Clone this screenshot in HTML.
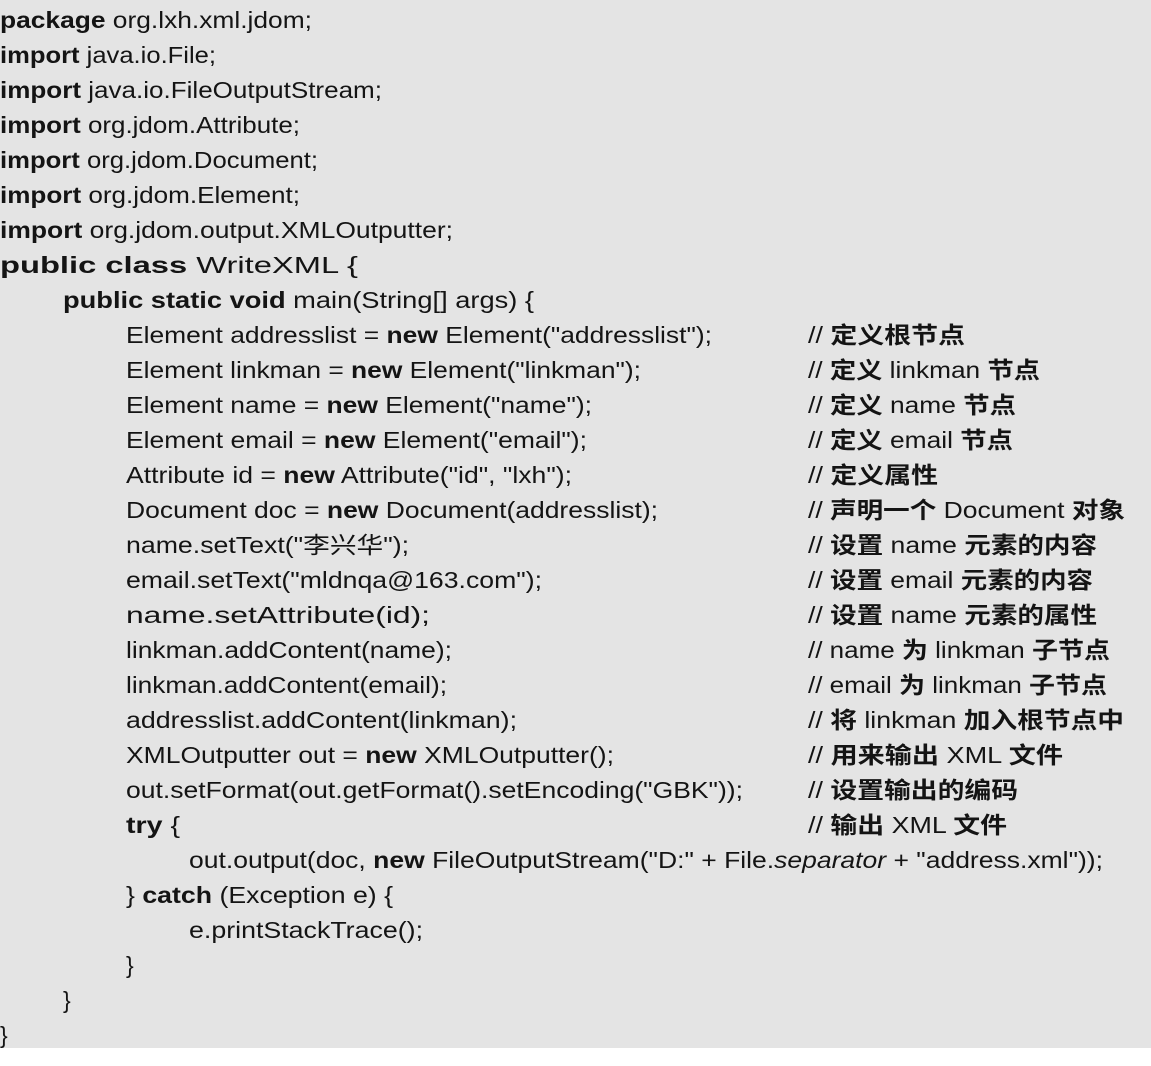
<!DOCTYPE html>
<html><head><meta charset="utf-8"><style>
html,body{margin:0;padding:0;background:#fff;}
svg{display:block}
text{font-family:"Liberation Sans","Noto Sans CJK SC",sans-serif;font-size:23px;fill:#141414;}
.b{font-weight:bold}
.c{font-weight:bold}
</style></head><body>
<svg width="1151" height="1066" xmlns="http://www.w3.org/2000/svg">
<rect x="0" y="0" width="1151" height="1048" fill="#e4e4e4"/>
<g>
<text x="0" y="28" textLength="312" lengthAdjust="spacingAndGlyphs"><tspan class="b">package</tspan> org.lxh.xml.jdom;</text>
<text x="0" y="63" textLength="216" lengthAdjust="spacingAndGlyphs"><tspan class="b">import</tspan> java.io.File;</text>
<text x="0" y="98" textLength="382" lengthAdjust="spacingAndGlyphs"><tspan class="b">import</tspan> java.io.FileOutputStream;</text>
<text x="0" y="133" textLength="300" lengthAdjust="spacingAndGlyphs"><tspan class="b">import</tspan> org.jdom.Attribute;</text>
<text x="0" y="168" textLength="318" lengthAdjust="spacingAndGlyphs"><tspan class="b">import</tspan> org.jdom.Document;</text>
<text x="0" y="203" textLength="300" lengthAdjust="spacingAndGlyphs"><tspan class="b">import</tspan> org.jdom.Element;</text>
<text x="0" y="238" textLength="453" lengthAdjust="spacingAndGlyphs"><tspan class="b">import</tspan> org.jdom.output.XMLOutputter;</text>
<text x="0" y="273" textLength="358" lengthAdjust="spacingAndGlyphs"><tspan class="b">public class</tspan> WriteXML {</text>
<text x="63" y="308" textLength="471" lengthAdjust="spacingAndGlyphs"><tspan class="b">public static void</tspan> main(String[] args) {</text>
<text x="126" y="343" textLength="586" lengthAdjust="spacingAndGlyphs">Element addresslist = <tspan class="b">new</tspan> Element("addresslist");</text>
<text x="126" y="378" textLength="515" lengthAdjust="spacingAndGlyphs">Element linkman = <tspan class="b">new</tspan> Element("linkman");</text>
<text x="126" y="413" textLength="466" lengthAdjust="spacingAndGlyphs">Element name = <tspan class="b">new</tspan> Element("name");</text>
<text x="126" y="448" textLength="461" lengthAdjust="spacingAndGlyphs">Element email = <tspan class="b">new</tspan> Element("email");</text>
<text x="126" y="483" textLength="446" lengthAdjust="spacingAndGlyphs">Attribute id = <tspan class="b">new</tspan> Attribute("id", "lxh");</text>
<text x="126" y="518" textLength="532" lengthAdjust="spacingAndGlyphs">Document doc = <tspan class="b">new</tspan> Document(addresslist);</text>
<text x="126" y="553" textLength="283" lengthAdjust="spacingAndGlyphs">name.setText("李兴华");</text>
<text x="126" y="588" textLength="416" lengthAdjust="spacingAndGlyphs">email.setText("mldnqa@163.com");</text>
<text x="126" y="623" textLength="304" lengthAdjust="spacingAndGlyphs">name.setAttribute(id);</text>
<text x="126" y="658" textLength="326" lengthAdjust="spacingAndGlyphs">linkman.addContent(name);</text>
<text x="126" y="693" textLength="321" lengthAdjust="spacingAndGlyphs">linkman.addContent(email);</text>
<text x="126" y="728" textLength="391" lengthAdjust="spacingAndGlyphs">addresslist.addContent(linkman);</text>
<text x="126" y="763" textLength="488" lengthAdjust="spacingAndGlyphs">XMLOutputter out = <tspan class="b">new</tspan> XMLOutputter();</text>
<text x="126" y="798" textLength="617" lengthAdjust="spacingAndGlyphs">out.setFormat(out.getFormat().setEncoding("GBK"));</text>
<text x="126" y="833" textLength="54" lengthAdjust="spacingAndGlyphs"><tspan class="b">try</tspan> {</text>
<text x="189" y="868" textLength="914" lengthAdjust="spacingAndGlyphs">out.output(doc, <tspan class="b">new</tspan> FileOutputStream("D:" + File.<tspan font-style="italic">separator</tspan> + "address.xml"));</text>
<text x="126" y="903" textLength="267" lengthAdjust="spacingAndGlyphs">} <tspan class="b">catch</tspan> (Exception e) {</text>
<text x="189" y="938" textLength="234" lengthAdjust="spacingAndGlyphs">e.printStackTrace();</text>
<text x="126" y="973">}</text>
<text x="63" y="1008">}</text>
<text x="0" y="1043">}</text>

<text x="808" y="343" textLength="157" lengthAdjust="spacingAndGlyphs">// <tspan class="c">定义根节点</tspan></text>
<text x="808" y="378" textLength="232" lengthAdjust="spacingAndGlyphs">// <tspan class="c">定义</tspan> linkman <tspan class="c">节点</tspan></text>
<text x="808" y="413" textLength="208" lengthAdjust="spacingAndGlyphs">// <tspan class="c">定义</tspan> name <tspan class="c">节点</tspan></text>
<text x="808" y="448" textLength="205" lengthAdjust="spacingAndGlyphs">// <tspan class="c">定义</tspan> email <tspan class="c">节点</tspan></text>
<text x="808" y="483" textLength="130" lengthAdjust="spacingAndGlyphs">// <tspan class="c">定义属性</tspan></text>
<text x="808" y="518" textLength="317" lengthAdjust="spacingAndGlyphs">// <tspan class="c">声明一个</tspan> Document <tspan class="c">对象</tspan></text>
<text x="808" y="553" textLength="289" lengthAdjust="spacingAndGlyphs">// <tspan class="c">设置</tspan> name <tspan class="c">元素的内容</tspan></text>
<text x="808" y="588" textLength="285" lengthAdjust="spacingAndGlyphs">// <tspan class="c">设置</tspan> email <tspan class="c">元素的内容</tspan></text>
<text x="808" y="623" textLength="289" lengthAdjust="spacingAndGlyphs">// <tspan class="c">设置</tspan> name <tspan class="c">元素的属性</tspan></text>
<text x="808" y="658" textLength="302" lengthAdjust="spacingAndGlyphs">// name <tspan class="c">为</tspan> linkman <tspan class="c">子节点</tspan></text>
<text x="808" y="693" textLength="299" lengthAdjust="spacingAndGlyphs">// email <tspan class="c">为</tspan> linkman <tspan class="c">子节点</tspan></text>
<text x="808" y="728" textLength="316" lengthAdjust="spacingAndGlyphs">// <tspan class="c">将</tspan> linkman <tspan class="c">加入根节点中</tspan></text>
<text x="808" y="763" textLength="255" lengthAdjust="spacingAndGlyphs">// <tspan class="c">用来输出</tspan> XML <tspan class="c">文件</tspan></text>
<text x="808" y="798" textLength="210" lengthAdjust="spacingAndGlyphs">// <tspan class="c">设置输出的编码</tspan></text>
<text x="808" y="833" textLength="199" lengthAdjust="spacingAndGlyphs">// <tspan class="c">输出</tspan> XML <tspan class="c">文件</tspan></text>
</g>
</svg>
</body></html>
